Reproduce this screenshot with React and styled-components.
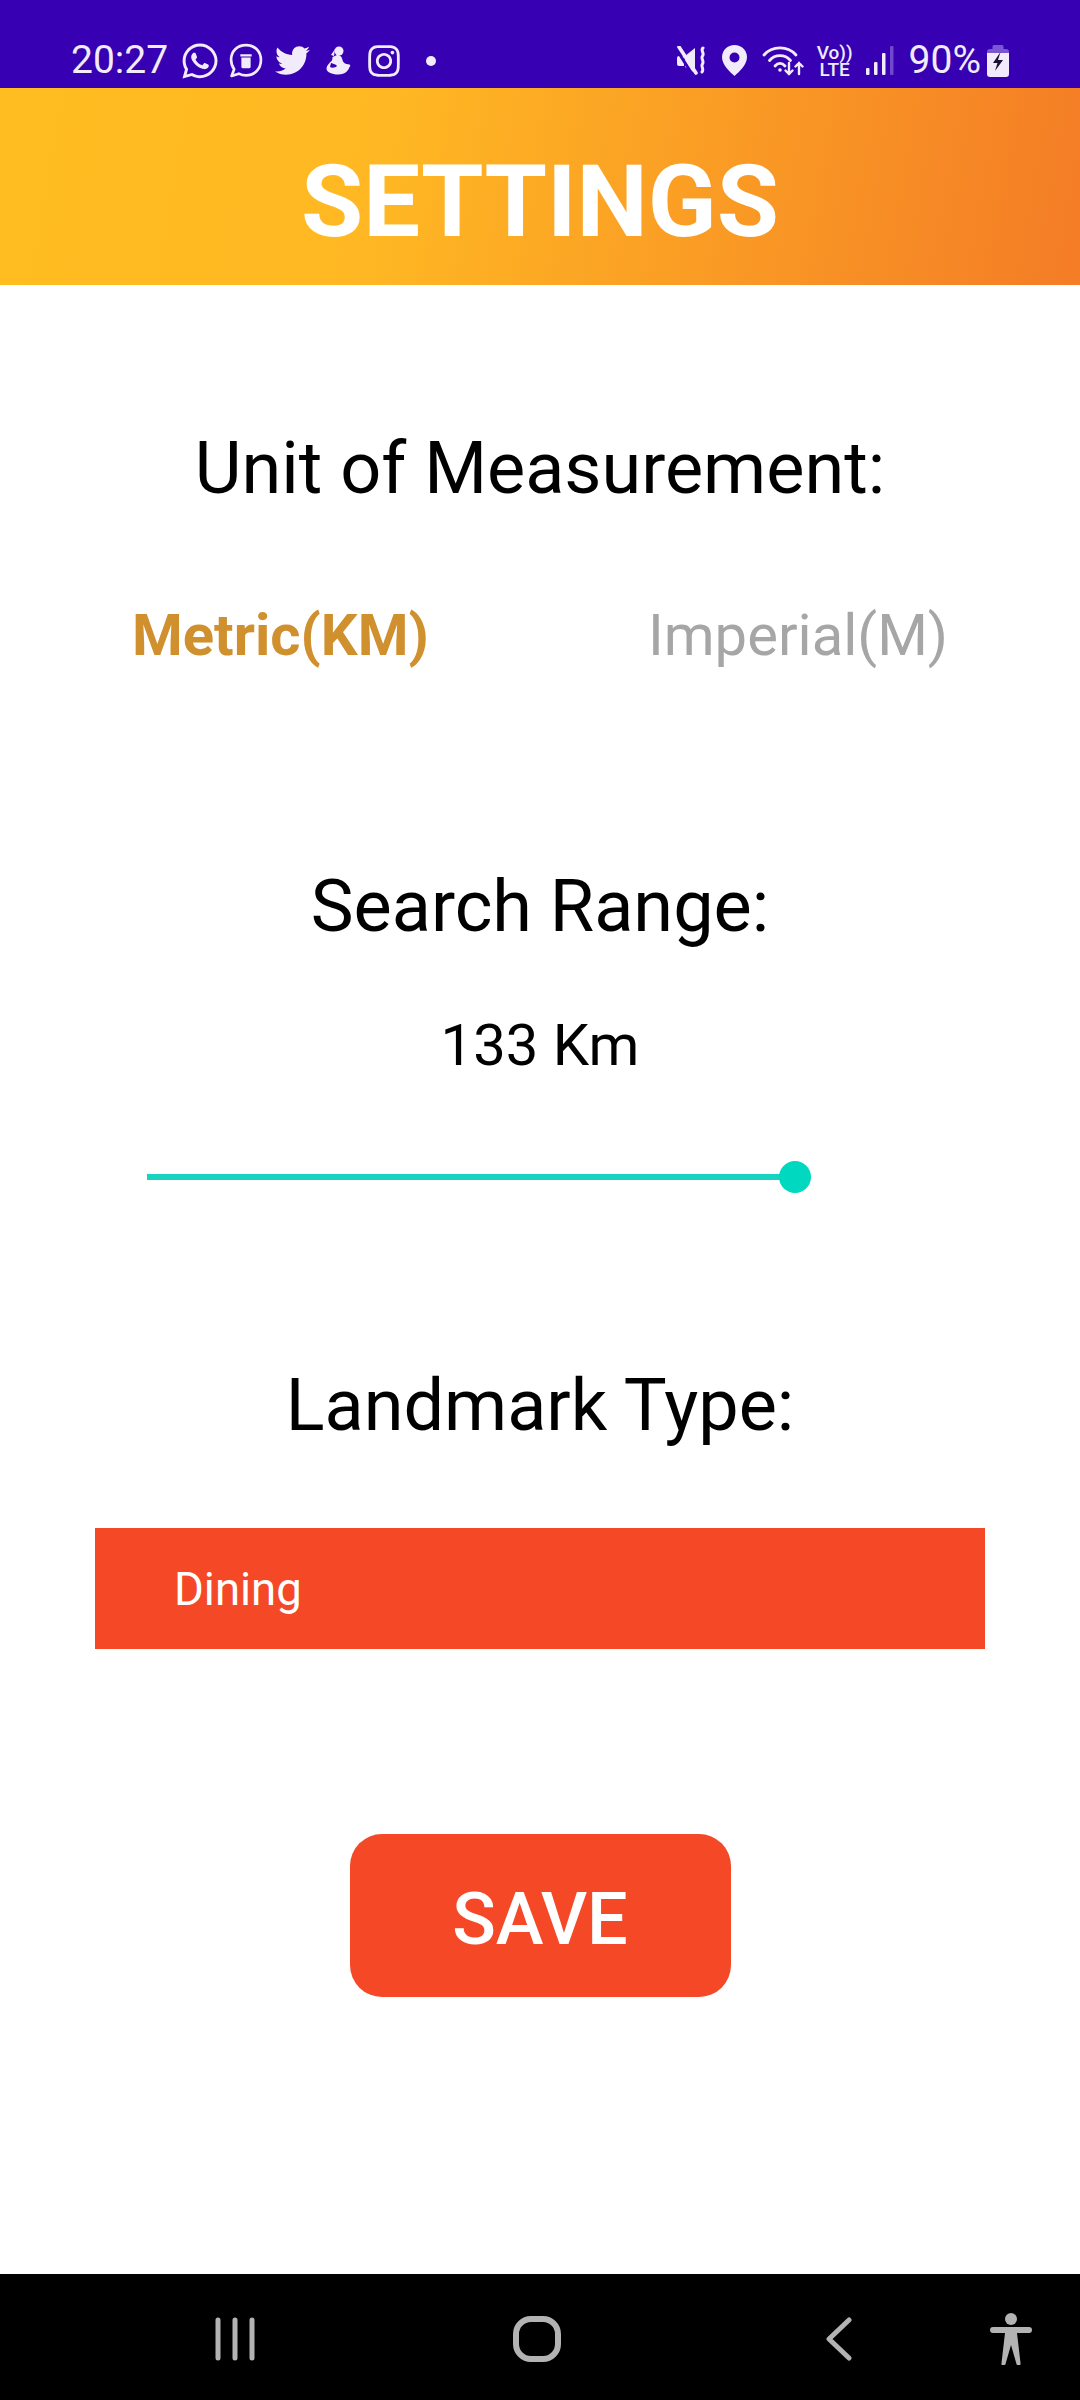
import styled, { createGlobalStyle } from "styled-components";
import { FaWhatsapp, FaTwitter, FaInstagram } from "react-icons/fa";

const GlobalStyle = createGlobalStyle`
  html, body {
    margin: 0;
    padding: 0;
    background: #fff;
    font-family: Roboto, "Liberation Sans", sans-serif;
  }
`;

const Screen = styled.div`
  width: 1080px;
  height: 2400px;
  display: flex;
  flex-direction: column;
  overflow: hidden;
  background: #fff;
`;

const StatusBar = styled.div`
  height: 88px;
  flex: none;
  box-sizing: border-box;
  padding: 43px 71px 0;
  display: flex;
  justify-content: space-between;
  align-items: flex-start;
  background: #3700b3;
  color: #f1ebfb;
`;

const StatusGroup = styled.div`
  display: flex;
  align-items: center;
  height: 35px;
  gap: ${(p) => p.$gap || 0}px;
`;

const StatusText = styled.span`
  font-size: 39px;
  line-height: 35px;
  font-weight: 400;
`;

const NotifSlot = styled.span`
  width: 46px;
  height: 35px;
  display: flex;
  align-items: center;
  justify-content: center;
  flex: none;
  margin-left: ${(p) => (p.$first ? 9 : 0)}px;
`;

const Dot = styled.span`
  width: 10px;
  height: 10px;
  margin-left: 2px;
  border-radius: 50%;
  background: #f1ebfb;
`;

const VoLte = styled.span`
  width: 32px;
  display: flex;
  flex-direction: column;
  align-items: center;
  font-size: 19px;
  line-height: 17px;
  font-weight: 500;
  white-space: nowrap;
`;

const BatteryGroup = styled.span`
  display: flex;
  align-items: center;
  gap: 6px;
`;

const Header = styled.header`
  height: 197px;
  flex: none;
  box-sizing: border-box;
  padding-top: 30px;
  display: flex;
  align-items: center;
  justify-content: center;
  background: linear-gradient(100deg, #ffbd20 0%, #ffb823 35%, #f47c26 100%);
`;

const HeaderTitle = styled.h1`
  margin: 0;
  font-size: 101px;
  line-height: 112px;
  font-weight: 700;
  color: #fff;
`;

const Body = styled.main`
  flex: 1;
  display: flex;
  flex-direction: column;
  align-items: center;
`;

const SectionTitle = styled.h2`
  margin: ${(p) => p.$top}px 0 0;
  font-size: 72px;
  line-height: 84px;
  font-weight: 400;
  color: #000;
`;

const UnitRow = styled.div`
  width: 100%;
  box-sizing: border-box;
  margin-top: 91px;
  padding: 0 132px;
  display: flex;
  justify-content: space-between;
`;

const UnitOption = styled.span`
  font-size: 58px;
  line-height: 66px;
  font-weight: ${(p) => (p.$active ? 700 : 400)};
  color: ${(p) => (p.$active ? "#cf902d" : "#a6a6a6")};
`;

const RangeValue = styled.div`
  margin-top: 63px;
  font-size: 58px;
  line-height: 66px;
  color: #000;
`;

const Slider = styled.div`
  position: relative;
  width: 648px;
  height: 6px;
  margin: 96px 0 0 147px;
  align-self: flex-start;
  background: #17d3bf;
`;

const Thumb = styled.span`
  position: absolute;
  right: -16px;
  top: -13px;
  width: 32px;
  height: 32px;
  border-radius: 50%;
  background: #00d8c0;
`;

const Dropdown = styled.div`
  width: 890px;
  height: 121px;
  box-sizing: border-box;
  margin-top: 80px;
  padding: 2px 0 0 79px;
  display: flex;
  align-items: center;
  background: #f44827;
  color: #fff;
  font-size: 45.500px;
`;

const SaveButton = styled.button`
  width: 381px;
  height: 163px;
  margin-top: 185px;
  padding: 8px 0 0;
  border: 0;
  border-radius: 32px;
  background: #f44827;
  color: #fff;
  font-family: inherit;
  font-size: 72px;
  font-weight: 500;
`;

const NavBar = styled.nav`
  height: 126px;
  flex: none;
  background: #000;
  display: flex;
  align-items: center;
`;

const NavIcon = styled.svg`
  flex: none;
  margin-left: ${(p) => p.$left}px;
  margin-top: 4px;
  fill: ${(p) => (p.$solid ? "#b3b3b3" : "none")};
  stroke: ${(p) => (p.$solid ? "none" : "#b3b3b3")};
  stroke-linecap: round;
  stroke-linejoin: round;
`;

const TrashBubble = () => (
  <svg width="34" height="35" viewBox="0 0 33 34" fill="none">
    <path d="M16.500 2C8 2 2 8 2 16c0 3.500 1.200 7 3 9.500L2.500 32l7-2.200c2 1 4.500 1.700 7 1.700 8.500 0 14.500-6.500 14.500-15S25 2 16.500 2z" stroke="#f1ebfb" strokeWidth="2.600" strokeLinejoin="round" />
    <path d="M11 11h11v2H11zM12 14h9v9a1.500 1.500 0 0 1-1.500 1.500h-6A1.500 1.500 0 0 1 12 23z" fill="#f1ebfb" />
  </svg>
);

const FigureIcon = () => (
  <svg width="26" height="29" viewBox="0 0 26 29" fill="#f1ebfb">
    <circle cx="14" cy="5" r="4.500" />
    <path d="M10 3 6 9l3 1z" />
    <path d="M12 9c3.500 0 5 2 5.500 5 .4 2 2 3.500 4 4l3 .5c1 .3 1 2 0 2.500-1 3-4 7.500-11 7.500-7 0-12-2.500-12-6 0-3 3-5.500 5-7.500 1-1.500 1-3 1-4z" />
    <path d="M6 17c2 1 5 1 6 3-2 2-5 2-7 1z" fill="#3700b3" />
  </svg>
);

const MuteIcon = () => (
  <svg width="30" height="29" viewBox="0 0 30 29" fill="#f1ebfb">
    <path d="M2 10h5v10H2a2 2 0 0 1-2-2v-6a2 2 0 0 1 2-2zM8 10l10-8v25L8 21z" />
    <path d="M0 4l15 24" stroke="#3700b3" strokeWidth="3" />
    <path d="M2 1l17 26" stroke="#f1ebfb" strokeWidth="3.600" strokeLinecap="round" />
    <path d="M26 2c-3 2.500 2 5-.5 8-2 2.500 2 5 0 8-2 2.500 2 5-.500 8" fill="none" stroke="#f1ebfb" strokeWidth="3" strokeLinecap="round" />
  </svg>
);

const PinIcon = () => (
  <svg width="25" height="31" viewBox="0 0 25 31">
    <path fillRule="evenodd" fill="#f1ebfb" d="M12.500 0C5.500 0 0 5.300 0 12.300 0 20 8 27 12.500 31 17 27 25 20 25 12.300 25 5.300 19.500 0 12.500 0zm0 7.500a5 5 0 1 1 0 10 5 5 0 0 1 0-10z" />
  </svg>
);

const WifiIcon = () => (
  <svg width="42" height="31" viewBox="0 0 42 31" fill="none" stroke="#f1ebfb" strokeWidth="2.800" strokeLinecap="round">
    <path d="M2 10C10 .5 26 .5 34 10" />
    <path d="M7.500 15.500C13 9 23 9 28.500 15.500" />
    <path d="M13 21c3-3.500 7-3.500 10 0" />
    <circle cx="18" cy="25" r="1.800" fill="#f1ebfb" stroke="none" />
    <path d="M27 18v11M23.500 25.500 27 29l3.500-3.500" strokeWidth="2.400" />
    <path d="M37 29V18M33.500 21.500 37 18l3.500 3.500" strokeWidth="2.400" />
  </svg>
);

const SignalIcon = () => (
  <svg width="28" height="29" viewBox="0 0 28 29">
    <rect x="0" y="22" width="3.500" height="7" rx="1" fill="#f1ebfb" />
    <rect x="8" y="16" width="3.500" height="13" rx="1" fill="#f1ebfb" />
    <rect x="16" y="7" width="3.500" height="22" rx="1" fill="#f1ebfb" />
    <rect x="24" y="0" width="3.500" height="29" rx="1" fill="#6f48cb" />
  </svg>
);

const BatteryIcon = () => (
  <svg width="22" height="32" viewBox="0 0 22 32">
    <path d="M7 0h8a1.500 1.500 0 0 1 1.500 1.500V4H19a3 3 0 0 1 3 3v5H0V7a3 3 0 0 1 3-3h2.500V1.500A1.500 1.500 0 0 1 7 0z" fill="#7a56d0" />
    <path d="M0 8h22v21a3 3 0 0 1-3 3H3a3 3 0 0 1-3-3z" fill="#f1ebfb" />
    <path d="M13.500 7 6 18h4.500L8 26l8-11h-5z" fill="#1b1030" />
  </svg>
);

const App = () => {
  return (
    <Screen>
      <GlobalStyle />
      <StatusBar>
        <StatusGroup>
          <StatusText>20:27</StatusText>
          <NotifSlot $first><FaWhatsapp size={40} /></NotifSlot>
          <NotifSlot><TrashBubble /></NotifSlot>
          <NotifSlot><FaTwitter size={35} /></NotifSlot>
          <NotifSlot><FigureIcon /></NotifSlot>
          <NotifSlot><FaInstagram size={36} /></NotifSlot>
          <NotifSlot><Dot /></NotifSlot>
        </StatusGroup>
        <StatusGroup $gap={15}>
          <MuteIcon />
          <PinIcon />
          <WifiIcon />
          <VoLte><span>Vo))</span><span>LTE</span></VoLte>
          <SignalIcon />
          <BatteryGroup>
            <StatusText>90%</StatusText>
            <BatteryIcon />
          </BatteryGroup>
        </StatusGroup>
      </StatusBar>

      <Header>
        <HeaderTitle>SETTINGS</HeaderTitle>
      </Header>

      <Body>
        <SectionTitle $top={142}>Unit of Measurement:</SectionTitle>
        <UnitRow>
          <UnitOption $active>Metric(KM)</UnitOption>
          <UnitOption>Imperial(M)</UnitOption>
        </UnitRow>
        <SectionTitle $top={197}>Search Range:</SectionTitle>
        <RangeValue>133 Km</RangeValue>
        <Slider><Thumb /></Slider>
        <SectionTitle $top={184}>Landmark Type:</SectionTitle>
        <Dropdown>Dining</Dropdown>
        <SaveButton>SAVE</SaveButton>
      </Body>

      <NavBar>
        <NavIcon $left={215} width="40" height="44" viewBox="0 0 40 44" strokeWidth="5">
          <path d="M3 3v38M20 3v38M37 3v38" />
        </NavIcon>
        <NavIcon $left={258} width="48" height="46" viewBox="0 0 48 46" strokeWidth="6">
          <rect x="3" y="3" width="42" height="40" rx="15" />
        </NavIcon>
        <NavIcon $left={265} width="26" height="44" viewBox="0 0 26 44" strokeWidth="5">
          <path d="M23 3 3 22l20 19" />
        </NavIcon>
        <NavIcon $left={138} $solid width="42" height="52" viewBox="0 0 42 52">
          <circle cx="21" cy="6" r="6" />
          <path d="M3 14h36a2.500 2.500 0 0 1 0 6H27l3.500 30a2 2 0 0 1-4 1L21 32l-5.500 19a2 2 0 0 1-4-1L15 20H3a2.500 2.500 0 0 1 0-6z" />
        </NavIcon>
      </NavBar>
    </Screen>
  );
};

export default App;
